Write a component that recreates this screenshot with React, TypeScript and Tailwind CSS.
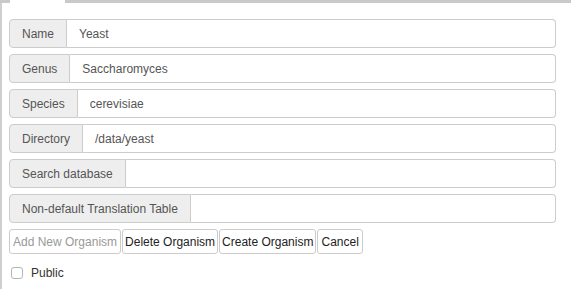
import React from 'react';

const fields: { label: string; value: string }[] = [
  { label: 'Name', value: 'Yeast' },
  { label: 'Genus', value: 'Saccharomyces' },
  { label: 'Species', value: 'cerevisiae' },
  { label: 'Directory', value: '/data/yeast' },
  { label: 'Search database', value: '' },
  { label: 'Non-default Translation Table', value: '' },
];

function FieldRow({ label, value }: { label: string; value: string }) {
  return (
    <div className="flex h-[29px] w-[547px]">
      <span className="flex items-center rounded-l-[4px] border border-[#ccc] bg-[#eee] px-[12px] text-[12px] text-[#555]">
        {label}
      </span>
      <input
        className="flex-1 rounded-r-[4px] border border-l-0 border-[#ccc] bg-white px-[12px] text-[12px] text-[#555] outline-none"
        defaultValue={value}
      />
    </div>
  );
}

export default function App() {
  return (
    <div
      className="flex h-[289px] w-[571px] flex-col bg-white"
      style={{ fontFamily: '"Liberation Sans", Arial, sans-serif' }}
    >
      <div className="flex h-[3px] shrink-0">
        <div className="w-[10px] bg-[#c9c9c9]" />
        <div className="w-[55px] bg-white" />
        <div className="flex-1 bg-[#c9c9c9]" />
      </div>
      <div className="flex flex-1 border-l-[2px] border-[#cfcfcf]">
        <div className="flex flex-col pl-[7px] pt-[16px]">
          <div className="flex flex-col gap-[6px]">
            {fields.map((f) => (
              <FieldRow key={f.label} label={f.label} value={f.value} />
            ))}
          </div>
          <div className="mt-[6px] flex gap-[1px] text-[12px]">
            <button className="h-[25px] rounded-[3px] border border-[#ccc] bg-white px-[3px] text-[#999]">
              Add New Organism
            </button>
            <button className="h-[25px] rounded-[3px] border border-[#ccc] bg-white px-[2px] text-[#222]">
              Delete Organism
            </button>
            <button className="h-[25px] rounded-[3px] border border-[#ccc] bg-white px-[2px] text-[#222]">
              Create Organism
            </button>
            <button className="h-[25px] rounded-[3px] border border-[#ccc] bg-white px-[3px] text-[#222]">
              Cancel
            </button>
          </div>
          <label className="mt-[10px] flex items-center gap-[8px] text-[12px] text-[#333]">
            <span className="ml-[2px] h-[12px] w-[12px] rounded-[3px] border border-[#b5b5b5] bg-white" />
            Public
          </label>
        </div>
      </div>
    </div>
  );
}
